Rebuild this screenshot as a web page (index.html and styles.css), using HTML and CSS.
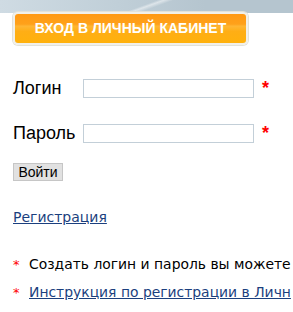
FILE: index.html
```html
<!DOCTYPE html>
<html lang="ru">
<head>
  <meta charset="UTF-8" />
  <title>Вход в личный кабинет</title>
  <link rel="stylesheet" href="styles.css">
</head>
<body>
  <div class="top">
    <div class="cabinet-button">ВХОД В ЛИЧНЫЙ КАБИНЕТ</div>
  </div>

  <form class="login">
    <div class="row">
      <label for="login">Логин</label>
      <input type="text" id="login">
      <span class="req">*</span>
    </div>
    <div class="row">
      <label for="pass">Пароль</label>
      <input type="password" id="pass">
      <span class="req">*</span>
    </div>
    <button type="button" class="enter">Войти</button>
  </form>

  <a class="reg" href="#">Регистрация</a>

  <ul class="notes">
    <li><span class="star">*</span>Создать логин и пароль вы можете</li>
    <li><span class="star">*</span><a href="#">Инструкция по регистрации в Личн</a></li>
  </ul>
</body>
</html>
```

FILE: styles.css
```css
body {
  margin: 0;
  background: #fff;
  font-family: "Liberation Sans", Arial, sans-serif;
  color: #000;
  overflow: hidden;
  width: 293px;
}
.top {
  padding: 12px 0 0 13px;
  background:
    linear-gradient(160deg, rgba(255,255,255,0) 0 48%, rgba(255,255,255,0.5) 50%, rgba(255,255,255,0) 53%) 0 0 / 100% 13px no-repeat,
    linear-gradient(90deg, #cfdbe3 0, #c0cfd8 40%, #b5c5cf 70%, #b5c5cf 100%) 0 0 / 100% 13px no-repeat;
}
.cabinet-button {
  width: 231px;
  height: 29px;
  line-height: 29px;
  text-align: center;
  border: 2px solid #f1f0ea;
  border-radius: 5px;
  background: linear-gradient(#ff9913 0, #ffa11a 35%, #ffb634 42%, #ffae15 60%, #ffb10c 100%);
  color: #fff;
  font-weight: bold;
  font-size: 14px;
  box-shadow: 0 0 0 1px #e2e2da;
}
.login {
  margin: 34px 0 0 13px;
}
.row {
  display: flex;
  align-items: center;
  height: 19px;
  margin-bottom: 26px;
}
.row label {
  width: 70px;
  font-size: 18px;
}
.row input {
  width: 167px;
  height: 15px;
  padding: 1px;
  margin: 0;
  border: 1px solid #c3cfd8;
}
.req {
  color: #f00;
  font-weight: bold;
  font-size: 18px;
  margin-left: 8px;
  line-height: 19px;
  align-self: flex-start;
}
.enter {
  display: block;
  margin-top: -6px;
  width: 50px;
  height: 18px;
  padding: 0;
  font-family: "Liberation Sans", Arial, sans-serif;
  font-size: 14px;
  border: 1px solid #c6c6c6;
  background: #e1e1e1;
  color: #000;
}
.reg {
  display: inline-block;
  margin: 28px 0 0 13px;
  font-family: "DejaVu Sans", Verdana, sans-serif;
  font-size: 14px;
  color: #1b3f7e;
}
.notes {
  list-style: none;
  margin: 30px 0 0 13px;
  padding: 0;
  white-space: nowrap;
  font-family: "DejaVu Sans", Verdana, sans-serif;
  font-size: 13.9px;
}
.notes li {
  margin-bottom: 12px;
}
.notes a {
  color: #1b3f7e;
}
.star {
  display: inline-block;
  width: 16px;
  color: #f00;
  font-size: 13px;
}
```
